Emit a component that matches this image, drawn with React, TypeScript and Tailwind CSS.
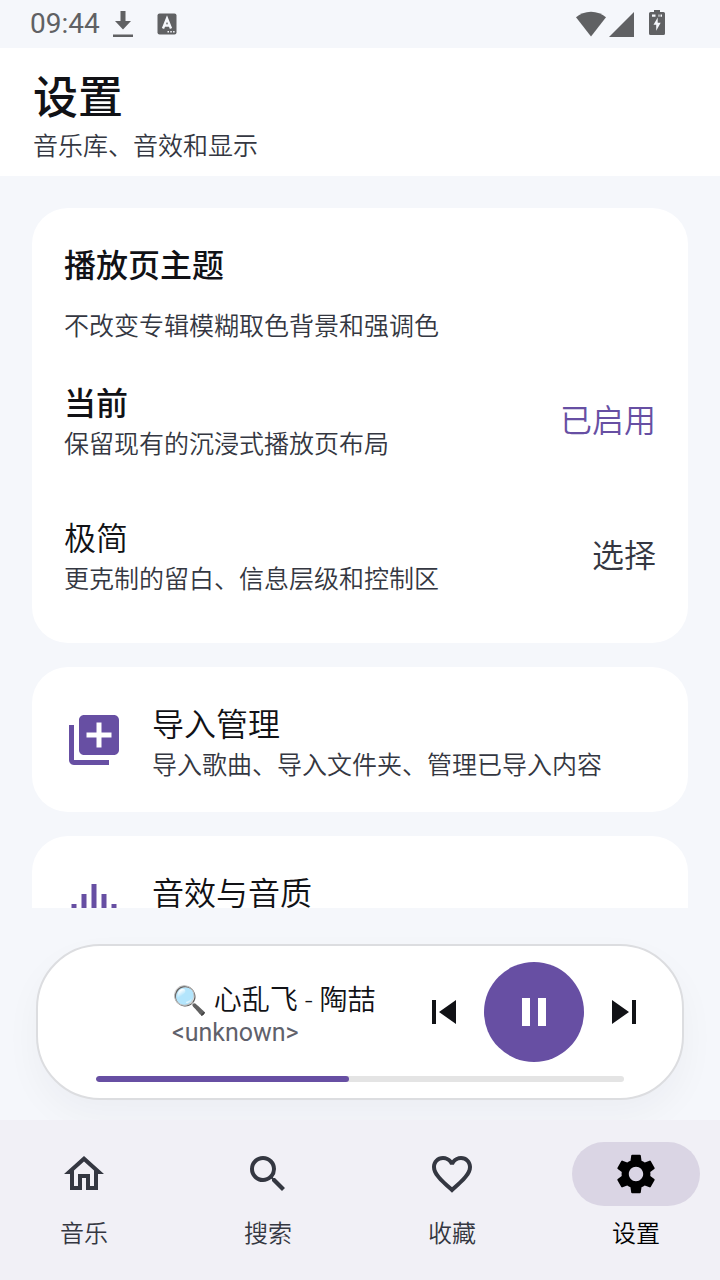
import React, { useState } from 'react';
import {
  MdFavoriteBorder,
  MdGraphicEq,
  MdLibraryAdd,
  MdOutlineHome,
  MdPause,
  MdPlayArrow,
  MdSearch,
  MdSettings,
  MdSkipNext,
  MdSkipPrevious,
} from 'react-icons/md';

const themes = [
  { id: 'current', name: '当前', desc: '保留现有的沉浸式播放页布局' },
  { id: 'minimal', name: '极简', desc: '更克制的留白、信息层级和控制区' },
];

const entries = [
  { name: '导入管理', desc: '导入歌曲、导入文件夹、管理已导入内容', icon: MdLibraryAdd },
  { name: '音效与音质', desc: '均衡器、音量平衡和输出设置', icon: MdGraphicEq },
];

const tabs = [
  { id: 'music', label: '音乐', icon: MdOutlineHome },
  { id: 'search', label: '搜索', icon: MdSearch },
  { id: 'favorites', label: '收藏', icon: MdFavoriteBorder },
  { id: 'settings', label: '设置', icon: MdSettings },
];

const StatusBar: React.FC = () => (
  <div className="flex h-12 shrink-0 items-center justify-between pr-[55px] pl-[30px] text-[#606163]">
    <div className="flex items-center">
      <span className="text-[28px] leading-8 font-normal">09:44</span>
      <svg className="ml-[13px] h-7 w-5" viewBox="0 0 20 28" fill="currentColor">
        <path d="M7.500 1h5v10H18l-8 8.500L2 11h5.500zM0 24.500h20v2.500H0z" />
      </svg>
      <svg className="ml-6 h-[22px] w-5" viewBox="0 0 20 22">
        <rect x="0.500" y="0.500" width="19" height="21" rx="2" fill="currentColor" />
        <path d="M6 15.500 10 5.500l4 10M7.500 12.500h5" fill="none" stroke="#f5f7fb" strokeWidth="2.400" />
        <path d="M10.500 18h1.500v1.500h-1.500zm2.800 0h1.500v1.500h-1.500zm2.800 0h1.500v1.500h-1.500z" fill="#f5f7fb" />
      </svg>
    </div>
    <div className="flex items-center">
      <svg className="h-[26px] w-[30px]" viewBox="0 0 30 26" fill="currentColor">
        <path d="M0 6.200C4 2.800 9.200.7 15 .7s11 2.100 15 5.500L15 25.500z" />
      </svg>
      <svg className="ml-[3px] h-[26px] w-[26px]" viewBox="0 0 26 26" fill="currentColor">
        <path d="M25 1v25H0z" />
      </svg>
      <svg className="mb-0.5 ml-3.5 h-[26px] w-4" viewBox="0 0 16 26" fill="currentColor">
        <path
          fillRule="evenodd"
          d="M5 0h6v2h3.500A1.500 1.500 0 0 1 16 3.500v20a1.500 1.500 0 0 1-1.500 1.500h-13A1.500 1.500 0 0 1 0 23.500v-20A1.500 1.500 0 0 1 1.500 2H5zM3 4.500v2.200h3.500V4.500zm6.500 0v2.200h1V4.500zm2 0v2.200h1.500V4.500zM8.700 7.500 4.500 14.800h2.700v6l4.500-8H8.700z"
        />
      </svg>
    </div>
  </div>
);

const App: React.FC = () => {
  const [theme, setTheme] = useState('current');
  const [tab, setTab] = useState('settings');
  const [playing, setPlaying] = useState(true);
  const progress = 48;

  return (
    <div className="flex h-screen flex-col overflow-hidden bg-[#f5f7fb] font-['Roboto','Noto_Sans_CJK_SC',sans-serif] text-[#111216]">
      <StatusBar />

      <header className="shrink-0 bg-white px-[33px] pt-[21px] pb-[11px]">
        <h1 className="text-[45px] leading-[60px] font-medium">设置</h1>
        <p className="text-[25px] leading-9 font-[350] text-[#343741]">音乐库、音效和显示</p>
      </header>

      <main className="flex min-h-0 flex-1 flex-col gap-6 overflow-y-auto px-8 pt-8 [scrollbar-width:none]">
        <section className="shrink-0 rounded-[36px] bg-white px-8 pt-[35px] pb-[19px]">
          <h2 className="text-[32px] leading-[47px] font-medium">播放页主题</h2>
          <p className="mt-5 mb-2.5 text-[25px] leading-[34px] font-[350] text-[#343741]">
            不改变专辑模糊取色背景和强调色
          </p>
          {themes.map((item) => {
            const active = item.id === theme;
            return (
              <button
                key={item.id}
                type="button"
                className="flex w-full items-center justify-between py-[27px] text-left"
                onClick={() => setTheme(item.id)}
              >
                <span>
                  <span className={`block text-[32px] leading-[47px] ${active ? 'font-medium' : 'font-[350]'}`}>
                    {item.name}
                  </span>
                  <span className="block text-[25px] leading-[34px] font-[350] text-[#343741]">{item.desc}</span>
                </span>
                <span className={`text-[32px] leading-[47px] font-[350] ${active ? 'text-[#674fa3]' : 'text-[#343741]'}`}>
                  {active ? '已启用' : '选择'}
                </span>
              </button>
            );
          })}
        </section>

        {entries.map(({ name, desc, icon: Icon }) => (
          <button
            key={name}
            type="button"
            className="flex w-full shrink-0 items-center gap-7 rounded-[36px] bg-white px-8 pt-[30px] pb-[29px] text-left"
          >
            <Icon className="size-[60px] shrink-0 text-[#674fa3]" />
            <span className="pt-[5px]">
              <span className="block text-[32px] leading-[47px] font-[350]">{name}</span>
              <span className="block text-[25px] leading-[34px] font-[350] text-[#343741]">{desc}</span>
            </span>
          </button>
        ))}
      </main>

      <section className="mx-9 mt-9 mb-5 shrink-0 rounded-[64px] border-2 border-[#dcdde0] bg-white py-4 shadow-[0_16px_36px_rgba(30,30,50,0.04)]">
        <div className="flex items-center pr-[18px] pl-[134px]">
          <div className="min-w-0 flex-1 pt-2.5">
            <p className="truncate text-[28px] leading-8 font-[350]">🔍 心乱飞 - 陶喆</p>
            <p className="truncate text-[25px] leading-8 text-[#5f616b]">&lt;unknown&gt;</p>
          </div>
          <button type="button" aria-label="上一首" className="flex w-20 justify-center">
            <MdSkipPrevious className="size-12" />
          </button>
          <button
            type="button"
            aria-label={playing ? '暂停' : '播放'}
            className="flex size-[100px] items-center justify-center rounded-full bg-[#674fa3] text-white"
            onClick={() => setPlaying(!playing)}
          >
            {playing ? <MdPause className="size-12" /> : <MdPlayArrow className="size-12" />}
          </button>
          <button type="button" aria-label="下一首" className="flex w-20 justify-center">
            <MdSkipNext className="size-12" />
          </button>
        </div>
        <div
          role="progressbar"
          aria-label="播放进度"
          aria-valuenow={progress}
          className="mx-[58px] mt-3.5 h-1.5 overflow-hidden rounded-full bg-[#e4e4e4]"
        >
          <div className="h-full rounded-full bg-[#674fa3]" style={{ width: `${progress}%` }} />
        </div>
      </section>

      <nav className="relative grid shrink-0 grid-cols-4 gap-4 bg-[#f1f0f6] pt-[22px] pb-[30px]">
        {tabs.map(({ id, label, icon: Icon }) => {
          const active = id === tab;
          return (
            <button
              key={id}
              type="button"
              className={`flex flex-col items-center gap-3 ${active ? 'text-black' : 'text-[#343741]'}`}
              onClick={() => setTab(id)}
            >
              <span className={`flex h-16 w-32 items-center justify-center rounded-full ${active ? 'bg-[#dad5e4]' : ''}`}>
                <Icon className="size-12" />
              </span>
              <span className="text-[24px] leading-8 font-[350]">{label}</span>
            </button>
          );
        })}
      </nav>
    </div>
  );
};

export default App;
